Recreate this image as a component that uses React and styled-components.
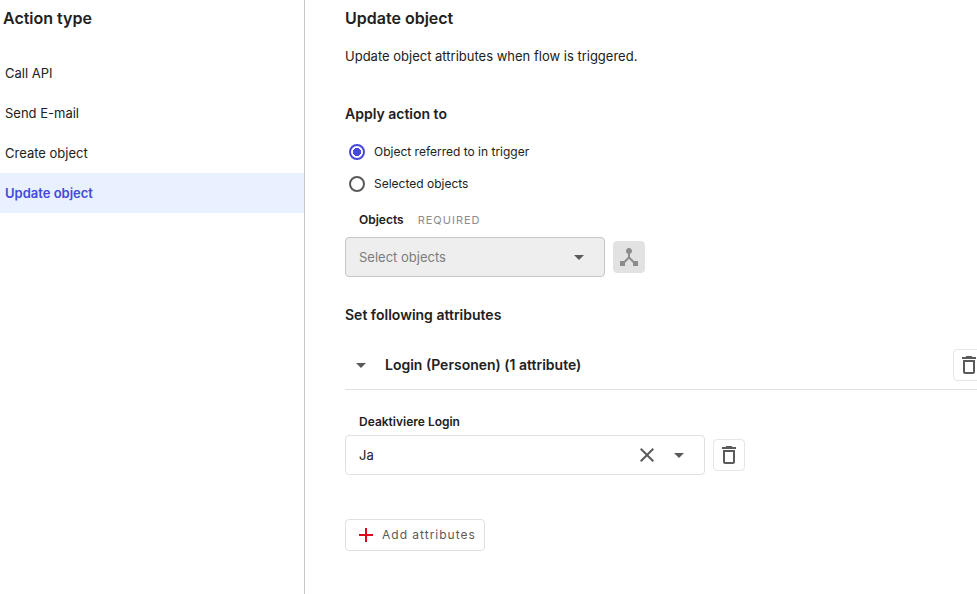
import React, { useState } from "react";
import styled, { createGlobalStyle } from "styled-components";
import { MdAdd, MdArrowDropDown, MdClose, MdDeleteOutline, MdDeviceHub } from "react-icons/md";

const GlobalStyle = createGlobalStyle`
  *, *::before, *::after { box-sizing: border-box; }
  body {
    margin: 0;
    background: #fff;
    color: #212121;
    font-family: Inter, "Liberation Sans", sans-serif;
    font-size: 13px;
    line-height: 20px;
    overflow-x: hidden;
  }
  button, select, input { font: inherit; color: inherit; }
`;

const Page = styled.div`
  display: grid;
  grid-template-columns: 305px minmax(0, 1fr);
  min-height: 100vh;
`;

const Sidebar = styled.nav`
  border-right: 1px solid #c6c6c6;
  padding-top: 8px;
`;

const PanelTitle = styled.h2`
  margin: 0;
  font-size: 16px;
  font-weight: 600;
  line-height: 20px;
`;

const SidebarTitle = styled(PanelTitle)`
  padding-left: 3px;
`;

const ActionList = styled.ul`
  list-style: none;
  margin: 25px 0 0;
  padding: 0;
`;

const ActionButton = styled.button`
  display: block;
  width: 100%;
  height: 40px;
  padding: 0 5px;
  border: 0;
  text-align: left;
  cursor: pointer;
  background: ${(p) => (p.$active ? "#e9f0ff" : "transparent")};
  color: ${(p) => (p.$active ? "#4549dc" : "#212121")};
  font-weight: ${(p) => (p.$active ? 600 : 400)};
`;

const Main = styled.main`
  padding: 8px 0 40px 40px;
`;

const Description = styled.p`
  margin: 18px 0 0;
`;

const SectionTitle = styled.h3`
  margin: 0;
  font-size: 14px;
  font-weight: 600;
  line-height: 20px;
`;

const ApplySection = styled.fieldset`
  border: 0;
  margin: 38px 0 0;
  padding: 0;
  min-width: 0;
`;

const Legend = styled.legend`
  padding: 0;
  margin-bottom: 12px;
`;

const RadioRow = styled.label`
  display: flex;
  align-items: center;
  gap: 9px;
  height: 32px;
  padding-left: 4px;
  font-size: 12px;
`;

const Radio = styled.input`
  appearance: none;
  width: 16px;
  height: 16px;
  margin: 0;
  border: 2px solid #5a5a5a;
  border-radius: 50%;

  &:checked {
    border-color: #4549dc;
    background: radial-gradient(circle, #4549dc 4px, transparent 4px);
  }
`;

const FieldLabel = styled.div`
  display: flex;
  gap: 14px;
  padding-left: 14px;
  margin-bottom: ${(p) => (p.$compact ? "3px" : "7px")};
  font-size: 12px;
  line-height: 20px;

  label { font-weight: 600; }
`;

const Required = styled.span`
  color: #8b8b8b;
  font-size: 11px;
  letter-spacing: 1px;
`;

const Field = styled.div`
  margin-top: ${(p) => (p.$spaced ? "22px" : "10px")};
`;

const FieldRow = styled.div`
  display: flex;
  align-items: center;
  gap: 8px;
`;

const SelectBox = styled.div`
  display: grid;
  align-items: center;
  width: ${(p) => (p.$wide ? "360px" : "260px")};

  > * { grid-area: 1 / 1; }
`;

const Select = styled.select`
  appearance: none;
  width: 100%;
  height: 40px;
  padding: 0 76px 0 13px;
  border: 1px solid #e0e0e0;
  border-radius: 4px;
  background: #fff;
  opacity: 1;

  &:disabled {
    border-color: #c6c6c6;
    background: #eee;
    color: #7c7c7c;
  }
`;

const Adornments = styled.div`
  display: flex;
  justify-self: end;
  gap: 8px;
  padding-right: 14px;
  color: #5a5a5a;
  pointer-events: none;
`;

const ClearButton = styled.button`
  display: flex;
  padding: 0;
  border: 0;
  background: none;
  cursor: pointer;
  pointer-events: auto;
`;

const IconButton = styled.button`
  display: flex;
  align-items: center;
  justify-content: center;
  flex: none;
  width: 32px;
  height: 32px;
  padding: 0;
  border: 1px solid #e6e6e6;
  border-radius: 4px;
  background: #fff;
  color: #5a5a5a;
  cursor: pointer;

  &:disabled {
    border-color: #e2e2e2;
    background: #e2e2e2;
    color: #8b8b8b;
    cursor: default;
  }
`;

const Attributes = styled.section`
  margin-top: 28px;
`;

/* The group header runs past the right edge of the visible pane. */
const GroupHeader = styled.div`
  display: flex;
  align-items: center;
  justify-content: space-between;
  margin: 16px -8px 0 0;
  padding: 8px 0;
  border-bottom: 1px solid #e0e0e0;
`;

const GroupToggle = styled.button`
  display: flex;
  align-items: center;
  gap: 12px;
  padding: 0 4px;
  border: 0;
  background: none;
  cursor: pointer;

  svg { color: #5a5a5a; }
`;

const AddButton = styled.button`
  display: inline-flex;
  align-items: center;
  gap: 4px;
  height: 32px;
  margin-top: 44px;
  padding: 0 8px;
  border: 1px solid #e0e0e0;
  border-radius: 4px;
  background: #fff;
  color: #5a5a5a;
  font-size: 12px;
  letter-spacing: 1px;
  cursor: pointer;

  svg { color: #e2001a; }
`;

const ACTIONS = ["Call API", "Send E-mail", "Create object", "Update object"];

const TARGETS = [
  { value: "trigger", label: "Object referred to in trigger" },
  { value: "selected", label: "Selected objects" },
];

export default function App() {
  const [action, setAction] = useState("Update object");
  const [target, setTarget] = useState("trigger");
  const [login, setLogin] = useState("Ja");
  const [open, setOpen] = useState(true);
  const locked = target === "trigger";

  return (
    <>
      <GlobalStyle />
      <Page>
        <Sidebar aria-label="Action type">
          <SidebarTitle>Action type</SidebarTitle>
          <ActionList>
            {ACTIONS.map((name) => (
              <li key={name}>
                <ActionButton type="button" $active={name === action} onClick={() => setAction(name)}>
                  {name}
                </ActionButton>
              </li>
            ))}
          </ActionList>
        </Sidebar>

        <Main>
          <PanelTitle>Update object</PanelTitle>
          <Description>Update object attributes when flow is triggered.</Description>

          <ApplySection>
            <Legend>
              <SectionTitle>Apply action to</SectionTitle>
            </Legend>
            {TARGETS.map(({ value, label }) => (
              <RadioRow key={value}>
                <Radio
                  type="radio"
                  name="target"
                  value={value}
                  checked={target === value}
                  onChange={() => setTarget(value)}
                />
                {label}
              </RadioRow>
            ))}
          </ApplySection>

          <Field>
            <FieldLabel>
              <label htmlFor="objects">Objects</label>
              <Required>REQUIRED</Required>
            </FieldLabel>
            <FieldRow>
              <SelectBox>
                <Select id="objects" disabled={locked} defaultValue="">
                  <option value="">Select objects</option>
                </Select>
                <Adornments>
                  <MdArrowDropDown size={24} />
                </Adornments>
              </SelectBox>
              <IconButton type="button" disabled={locked} aria-label="Browse hierarchy">
                <MdDeviceHub size={24} />
              </IconButton>
            </FieldRow>
          </Field>

          <Attributes>
            <SectionTitle>Set following attributes</SectionTitle>
            <GroupHeader>
              <GroupToggle type="button" aria-expanded={open} onClick={() => setOpen(!open)}>
                <MdArrowDropDown size={24} />
                <SectionTitle as="span">Login (Personen) (1 attribute)</SectionTitle>
              </GroupToggle>
              <IconButton type="button" aria-label="Delete group">
                <MdDeleteOutline size={24} />
              </IconButton>
            </GroupHeader>
            {open && (
              <Field $spaced>
                <FieldLabel $compact>
                  <label htmlFor="login">Deaktiviere Login</label>
                </FieldLabel>
                <FieldRow>
                  <SelectBox $wide>
                    <Select id="login" value={login} onChange={(e) => setLogin(e.target.value)}>
                      <option value="" />
                      <option>Ja</option>
                      <option>Nein</option>
                    </Select>
                    <Adornments>
                      <ClearButton type="button" aria-label="Clear" onClick={() => setLogin("")}>
                        <MdClose size={24} />
                      </ClearButton>
                      <MdArrowDropDown size={24} />
                    </Adornments>
                  </SelectBox>
                  <IconButton type="button" aria-label="Delete attribute">
                    <MdDeleteOutline size={24} />
                  </IconButton>
                </FieldRow>
              </Field>
            )}
            <AddButton type="button">
              <MdAdd size={24} />
              Add attributes
            </AddButton>
          </Attributes>
        </Main>
      </Page>
    </>
  );
}
